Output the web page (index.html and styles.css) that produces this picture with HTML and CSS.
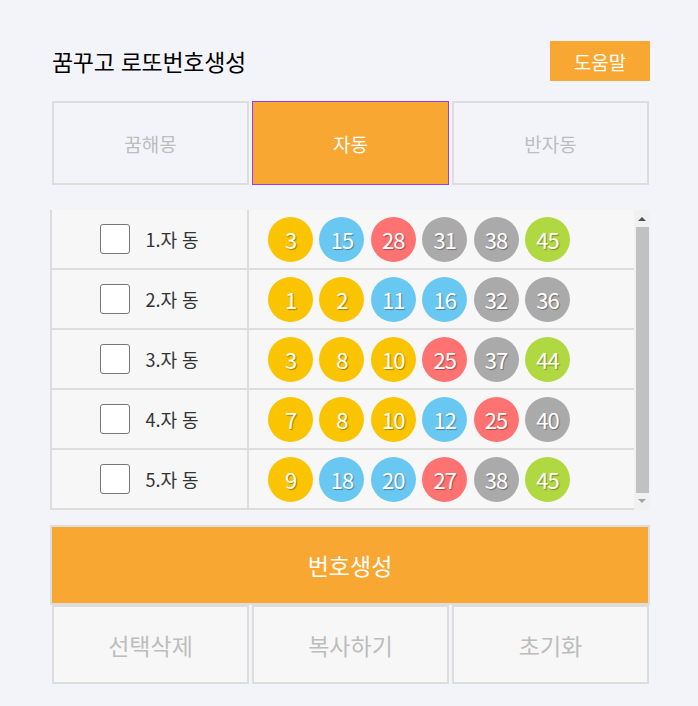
FILE: index.html
```html
<!DOCTYPE html>
<html lang="ko">
<head>
<meta charset="UTF-8" />
<meta name="viewport" content="width=device-width, initial-scale=1" />
<title>꿈꾸고 로또번호생성</title>
<link rel="stylesheet" href="styles.css">
</head>
<body>
<div class="wrap">

  <div class="header">
    <h1 class="title">꿈꾸고 로또번호생성</h1>
    <button class="help">도움말</button>
  </div>

  <div class="tabs">
    <div class="tab">꿈해몽</div>
    <div class="tab active">자동</div>
    <div class="tab">반자동</div>
  </div>

  <div class="list">
    <div class="rows">
      <div class="row">
        <div class="row-left"><span class="check"></span><span class="label">1.자 동</span></div>
        <div class="balls">
          <span class="ball y">3</span><span class="ball b">15</span><span class="ball r">28</span><span class="ball g">31</span><span class="ball g">38</span><span class="ball n">45</span>
        </div>
      </div>
      <div class="row">
        <div class="row-left"><span class="check"></span><span class="label">2.자 동</span></div>
        <div class="balls">
          <span class="ball y">1</span><span class="ball y">2</span><span class="ball b">11</span><span class="ball b">16</span><span class="ball g">32</span><span class="ball g">36</span>
        </div>
      </div>
      <div class="row">
        <div class="row-left"><span class="check"></span><span class="label">3.자 동</span></div>
        <div class="balls">
          <span class="ball y">3</span><span class="ball y">8</span><span class="ball y">10</span><span class="ball r">25</span><span class="ball g">37</span><span class="ball n">44</span>
        </div>
      </div>
      <div class="row">
        <div class="row-left"><span class="check"></span><span class="label">4.자 동</span></div>
        <div class="balls">
          <span class="ball y">7</span><span class="ball y">8</span><span class="ball y">10</span><span class="ball b">12</span><span class="ball r">25</span><span class="ball g">40</span>
        </div>
      </div>
      <div class="row">
        <div class="row-left"><span class="check"></span><span class="label">5.자 동</span></div>
        <div class="balls">
          <span class="ball y">9</span><span class="ball b">18</span><span class="ball b">20</span><span class="ball r">27</span><span class="ball g">38</span><span class="ball n">45</span>
        </div>
      </div>
    </div>
    <div class="scrollbar">
      <span class="arrow up"></span>
      <span class="thumb"></span>
      <span class="arrow down"></span>
    </div>
  </div>

  <button class="generate">번호생성</button>

  <div class="actions">
    <div class="action">선택삭제</div>
    <div class="action">복사하기</div>
    <div class="action">초기화</div>
  </div>

</div>
</body>
</html>
```

FILE: styles.css
```css
body {
  margin: 0;
  background: #f3f4f9;
  font-family: "Noto Sans CJK KR", "Noto Sans", sans-serif;
}
.wrap { width: 600px; padding: 41px 0 0 50px; }

/* header */
.header { display: flex; justify-content: space-between; align-items: center; height: 40px; padding-left: 2px; }
.title { margin: 0; font-size: 23px; font-weight: 400; color: #000; letter-spacing: -0.3px; }
.help {
  width: 100px; height: 40px; border: 0; background: #f8a732; color: #fff;
  font-family: inherit; font-size: 19px; padding: 0;
}

/* tabs */
.tabs, .actions { display: grid; grid-template-columns: repeat(3, 197px); gap: 3px; padding-left: 2px; }
.tabs { margin-top: 20px; }
.tab, .action {
  box-sizing: border-box; height: 84px; border: 2px solid #dddddd;
  display: flex; justify-content: center; align-items: center;
  font-size: 19px; color: #bdbdbd;
}
.tab.active { background: #f8a732; border: 1px solid #9b3cf0; color: #fff; }

/* number list */
.list { margin-top: 25px; height: 300px; display: flex; }
.rows { width: 584px; }
.row { display: flex; height: 58px; background: #f7f7f7; border-left: 2px solid #dddddd; border-bottom: 2px solid #dddddd; }
.row-left { width: 195px; border-right: 2px solid #dddddd; display: flex; justify-content: center; align-items: center; gap: 16px; }
.check { box-sizing: border-box; width: 30px; height: 30px; background: #fff; border: 1px solid #777; border-radius: 3px; }
.label { font-size: 18px; color: #333; width: 54px; white-space: nowrap; }

.balls { display: flex; align-items: center; gap: 6.4px; padding-left: 19px; }
.ball {
  width: 45px; height: 45px; border-radius: 50%;
  display: flex; justify-content: center; align-items: center;
  color: #fff; font-size: 22px; letter-spacing: -1px;
  text-shadow: 1px 1px 1px rgba(0,0,0,0.35);
}
.ball.y { background: #fbc400; }
.ball.b { background: #69c8f2; }
.ball.r { background: #ff7272; }
.ball.g { background: #aaaaaa; }
.ball.n { background: #b0d840; }

.scrollbar { width: 16px; background: #f1f1f1; display: flex; flex-direction: column; align-items: center; }
.arrow { width: 0; height: 0; border-left: 4px solid transparent; border-right: 4px solid transparent; }
.arrow.up { margin: 7px 0 6px; border-bottom: 4px solid #505050; }
.arrow.down { margin: 6px 0 7px; border-top: 4px solid #a3a3a3; }
.thumb { width: 13px; flex: 1; background: #c1c1c1; margin-left: 1px; }

/* bottom buttons */
.generate {
  display: block; box-sizing: border-box; width: 600px; height: 80px; margin-top: 15px;
  border: 2px solid #dddddd; background: #f8a732; color: #fff;
  font-family: inherit; font-size: 23px; padding: 0;
}
.action { height: 79px; background: #f7f7f7; font-size: 23px; }
```
